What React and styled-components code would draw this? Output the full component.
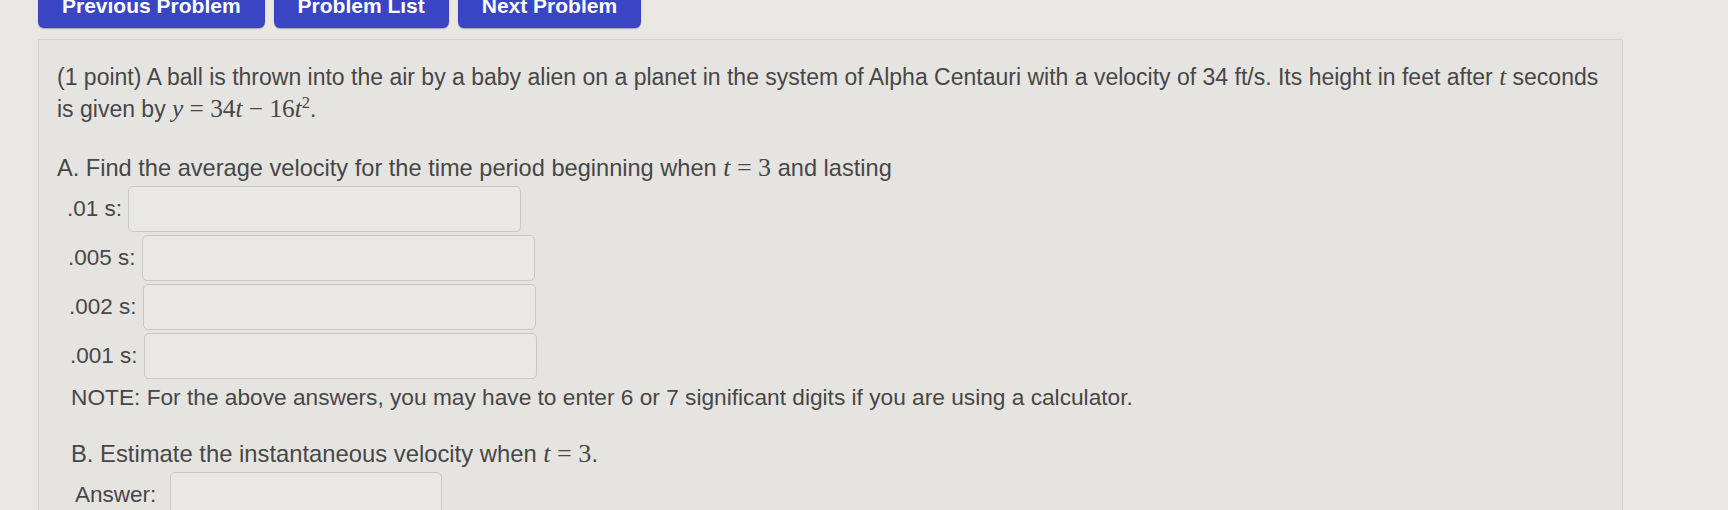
import styled, { createGlobalStyle } from "styled-components";

const GlobalStyle = createGlobalStyle`
  body {
    margin: 0;
    background: #e9e7e4;
    font-family: "Liberation Sans", Arial, sans-serif;
    color: #474747;
  }
`;

const rows = [
  { label: ".01 s:" },
  { label: ".005 s:" },
  { label: ".002 s:" },
  { label: ".001 s:" },
];

export default function App() {
  return (
    <Page>
      <GlobalStyle />
      <NavBar>
        <NavButton>Previous Problem</NavButton>
        <NavButton>Problem List</NavButton>
        <NavButton>Next Problem</NavButton>
      </NavBar>

      <Panel>
        <Text $size={23}>
          (1 point) A ball is thrown into the air by a baby alien on a planet in the
          system of Alpha Centauri with a velocity of 34 ft/s. Its height in feet after{" "}
          <Var>t</Var> seconds
          <br />
          is given by{" "}
          <Math>
            <Var>y</Var> = 34<Var>t</Var> − 16<Var>t</Var>
            <sup>2</sup>
          </Math>
          .
        </Text>

        <Text $size={23.6} $top={27}>
          A. Find the average velocity for the time period beginning when{" "}
          <Math>
            <Var>t</Var> = 3
          </Math>{" "}
          and lasting
        </Text>

        {rows.map((r, i) => (
          <AnswerRow key={r.label} $indent={10 + i}>
            {r.label}
            <AnswerInput />
          </AnswerRow>
        ))}

        <Text $size={22.7} $indent={14} $top={1}>
          NOTE: For the above answers, you may have to enter 6 or 7 significant digits if
          you are using a calculator.
        </Text>

        <Text $size={23.8} $indent={14} $top={25}>
          B. Estimate the instantaneous velocity when{" "}
          <Math>
            <Var>t</Var> = 3
          </Math>
          .
        </Text>

        <AnswerRow $indent={18} $gap={14}>
          Answer:
          <AnswerInput $width={272} />
        </AnswerRow>
      </Panel>
    </Page>
  );
}

const Page = styled.div`
  padding-left: 38px;
  height: 510px;
  overflow: hidden;
`;

const NavBar = styled.div`
  display: flex;
  gap: 9px;
  margin-top: -14px;
`;

const NavButton = styled.div`
  height: 42px;
  box-sizing: border-box;
  padding: 0 24px 12px;
  display: flex;
  align-items: flex-end;
  background: #3a45c3;
  color: #ffffff;
  font-weight: bold;
  font-size: 21px;
  line-height: 1;
  border-radius: 0 0 6px 6px;
  box-shadow: 0 1px 1px rgba(40, 40, 90, 0.35);
`;

const Panel = styled.div`
  margin-top: 11px;
  width: 1585px;
  min-height: 520px;
  box-sizing: border-box;
  padding: 21px 20px 0 18px;
  background: #e6e4e1;
  border: 1px solid #d5d3d0;
`;

const Text = styled.p`
  margin: ${(p) => p.$top || 0}px 0 0 ${(p) => p.$indent || 0}px;
  font-size: ${(p) => p.$size || 22}px;
  line-height: 32px;
  white-space: nowrap;
`;

const Math = styled.span`
  font-family: "Liberation Serif", "Times New Roman", serif;
  font-size: 1.1em;
  line-height: 1;
  white-space: nowrap;

  sup {
    font-size: 0.65em;
    line-height: 0;
    vertical-align: 0.55em;
  }
`;

const Var = styled.i`
  font-family: "Liberation Serif", "Times New Roman", serif;
  font-size: 1.1em;
  line-height: 1;

  ${Math} & {
    font-size: 1em;
  }
`;

const AnswerRow = styled.div`
  display: flex;
  align-items: center;
  gap: ${(p) => p.$gap || 6}px;
  height: 49px;
  margin-left: ${(p) => p.$indent || 0}px;
  font-size: 22.5px;
`;

const AnswerInput = styled.div`
  width: ${(p) => p.$width || 393}px;
  height: 46px;
  box-sizing: border-box;
  border: 1.5px solid #cac8c4;
  border-radius: 5px;
  background: #e9e8e5;
`;
